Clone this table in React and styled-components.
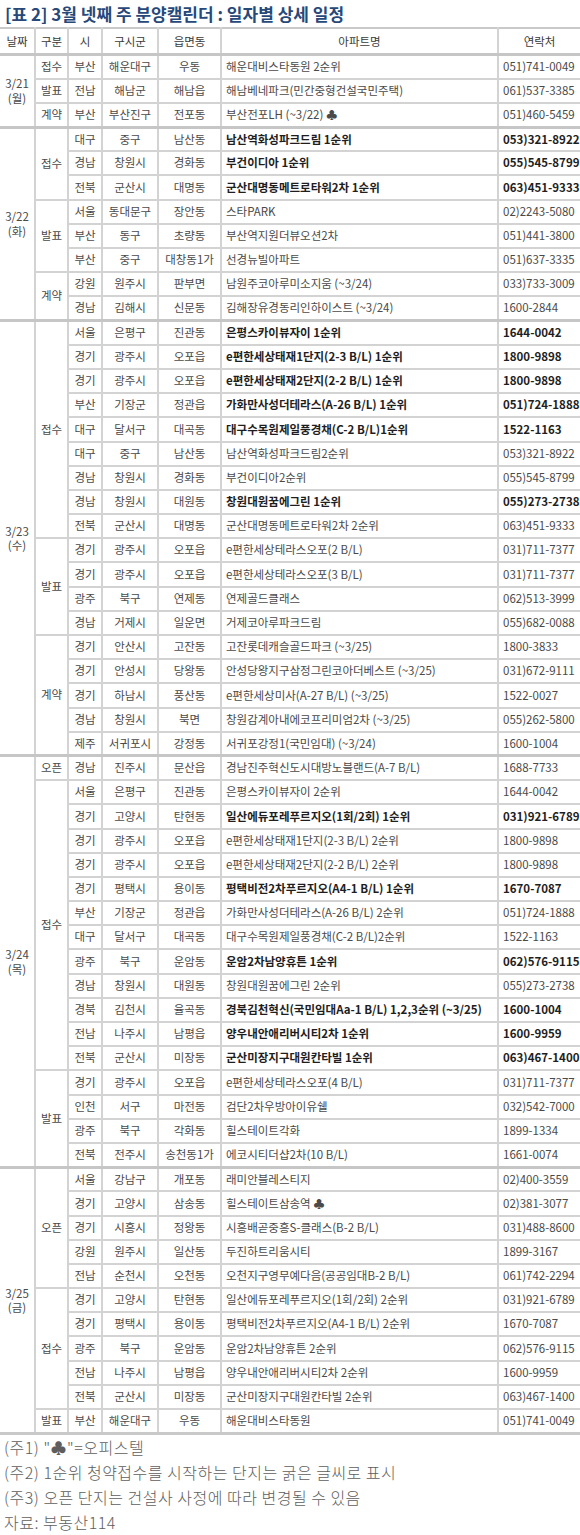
import React from 'react';
import styled, { createGlobalStyle } from 'styled-components';

const GlobalStyle = createGlobalStyle`
	html, body {
		margin: 0;
		padding: 0;
		background: #ffffff;
	}

	body {
		font-family: "Noto Sans CJK KR", "Noto Sans", sans-serif;
	}
`;

// 날짜 > 구분 > 단지, 여섯째 값 true = 1순위 청약접수 (굵은 글씨)
const schedule = [
	{
		date: '3/21',
		day: '월',
		groups: [
			{ type: '접수', rows: [['부산', '해운대구', '우동', '해운대비스타동원 2순위', '051)741-0049']] },
			{ type: '발표', rows: [['전남', '해남군', '해남읍', '해남베네파크(민간중형건설국민주택)', '061)537-3385']] },
			{ type: '계약', rows: [['부산', '부산진구', '전포동', '부산전포LH (~3/22) ♣', '051)460-5459']] },
		],
	},
	{
		date: '3/22',
		day: '화',
		groups: [
			{
				type: '접수',
				rows: [
					['대구', '중구', '남산동', '남산역화성파크드림 1순위', '053)321-8922', true],
					['경남', '창원시', '경화동', '부건이디아 1순위', '055)545-8799', true],
					['전북', '군산시', '대명동', '군산대명동메트로타워2차 1순위', '063)451-9333', true],
				],
			},
			{
				type: '발표',
				rows: [
					['서울', '동대문구', '장안동', '스타PARK', '02)2243-5080'],
					['부산', '동구', '초량동', '부산역지원더뷰오션2차', '051)441-3800'],
					['부산', '중구', '대창동1가', '선경뉴빌아파트', '051)637-3335'],
				],
			},
			{
				type: '계약',
				rows: [
					['강원', '원주시', '판부면', '남원주코아루미소지움 (~3/24)', '033)733-3009'],
					['경남', '김해시', '신문동', '김해장유경동리인하이스트 (~3/24)', '1600-2844'],
				],
			},
		],
	},
	{
		date: '3/23',
		day: '수',
		groups: [
			{
				type: '접수',
				rows: [
					['서울', '은평구', '진관동', '은평스카이뷰자이 1순위', '1644-0042', true],
					['경기', '광주시', '오포읍', 'e편한세상태재1단지(2-3 B/L) 1순위', '1800-9898', true],
					['경기', '광주시', '오포읍', 'e편한세상태재2단지(2-2 B/L) 1순위', '1800-9898', true],
					['부산', '기장군', '정관읍', '가화만사성더테라스(A-26 B/L) 1순위', '051)724-1888', true],
					['대구', '달서구', '대곡동', '대구수목원제일풍경채(C-2 B/L)1순위', '1522-1163', true],
					['대구', '중구', '남산동', '남산역화성파크드림2순위', '053)321-8922'],
					['경남', '창원시', '경화동', '부건이디아2순위', '055)545-8799'],
					['경남', '창원시', '대원동', '창원대원꿈에그린 1순위', '055)273-2738', true],
					['전북', '군산시', '대명동', '군산대명동메트로타워2차 2순위', '063)451-9333'],
				],
			},
			{
				type: '발표',
				rows: [
					['경기', '광주시', '오포읍', 'e편한세상테라스오포(2 B/L)', '031)711-7377'],
					['경기', '광주시', '오포읍', 'e편한세상테라스오포(3 B/L)', '031)711-7377'],
					['광주', '북구', '연제동', '연제골드클래스', '062)513-3999'],
					['경남', '거제시', '일운면', '거제코아루파크드림', '055)682-0088'],
				],
			},
			{
				type: '계약',
				rows: [
					['경기', '안산시', '고잔동', '고잔롯데캐슬골드파크 (~3/25)', '1800-3833'],
					['경기', '안성시', '당왕동', '안성당왕지구삼정그린코아더베스트 (~3/25)', '031)672-9111'],
					['경기', '하남시', '풍산동', 'e편한세상미사(A-27 B/L) (~3/25)', '1522-0027'],
					['경남', '창원시', '북면', '창원감계아내에코프리미엄2차 (~3/25)', '055)262-5800'],
					['제주', '서귀포시', '강정동', '서귀포강정1(국민임대) (~3/24)', '1600-1004'],
				],
			},
		],
	},
	{
		date: '3/24',
		day: '목',
		groups: [
			{ type: '오픈', rows: [['경남', '진주시', '문산읍', '경남진주혁신도시대방노블랜드(A-7 B/L)', '1688-7733']] },
			{
				type: '접수',
				rows: [
					['서울', '은평구', '진관동', '은평스카이뷰자이 2순위', '1644-0042'],
					['경기', '고양시', '탄현동', '일산에듀포레푸르지오(1회/2회) 1순위', '031)921-6789', true],
					['경기', '광주시', '오포읍', 'e편한세상태재1단지(2-3 B/L) 2순위', '1800-9898'],
					['경기', '광주시', '오포읍', 'e편한세상태재2단지(2-2 B/L) 2순위', '1800-9898'],
					['경기', '평택시', '용이동', '평택비전2차푸르지오(A4-1 B/L) 1순위', '1670-7087', true],
					['부산', '기장군', '정관읍', '가화만사성더테라스(A-26 B/L) 2순위', '051)724-1888'],
					['대구', '달서구', '대곡동', '대구수목원제일풍경채(C-2 B/L)2순위', '1522-1163'],
					['광주', '북구', '운암동', '운암2차남양휴튼 1순위', '062)576-9115', true],
					['경남', '창원시', '대원동', '창원대원꿈에그린 2순위', '055)273-2738'],
					['경북', '김천시', '율곡동', '경북김천혁신(국민임대Aa-1 B/L) 1,2,3순위 (~3/25)', '1600-1004', true],
					['전남', '나주시', '남평읍', '양우내안애리버시티2차 1순위', '1600-9959', true],
					['전북', '군산시', '미장동', '군산미장지구대원칸타빌 1순위', '063)467-1400', true],
				],
			},
			{
				type: '발표',
				rows: [
					['경기', '광주시', '오포읍', 'e편한세상테라스오포(4 B/L)', '031)711-7377'],
					['인천', '서구', '마전동', '검단2차우방아이유쉘', '032)542-7000'],
					['광주', '북구', '각화동', '힐스테이트각화', '1899-1334'],
					['전북', '전주시', '송천동1가', '에코시티더샵2차(10 B/L)', '1661-0074'],
				],
			},
		],
	},
	{
		date: '3/25',
		day: '금',
		groups: [
			{
				type: '오픈',
				rows: [
					['서울', '강남구', '개포동', '래미안블레스티지', '02)400-3559'],
					['경기', '고양시', '삼송동', '힐스테이트삼송역 ♣', '02)381-3077'],
					['경기', '시흥시', '정왕동', '시흥배곧중흥S-클래스(B-2 B/L)', '031)488-8600'],
					['강원', '원주시', '일산동', '두진하트리움시티', '1899-3167'],
					['전남', '순천시', '오천동', '오천지구영무예다음(공공임대B-2 B/L)', '061)742-2294'],
				],
			},
			{
				type: '접수',
				rows: [
					['경기', '고양시', '탄현동', '일산에듀포레푸르지오(1회/2회) 2순위', '031)921-6789'],
					['경기', '평택시', '용이동', '평택비전2차푸르지오(A4-1 B/L) 2순위', '1670-7087'],
					['광주', '북구', '운암동', '운암2차남양휴튼 2순위', '062)576-9115'],
					['전남', '나주시', '남평읍', '양우내안애리버시티2차 2순위', '1600-9959'],
					['전북', '군산시', '미장동', '군산미장지구대원칸타빌 2순위', '063)467-1400'],
				],
			},
			{ type: '발표', rows: [['부산', '해운대구', '우동', '해운대비스타동원', '051)741-0049']] },
		],
	},
];

const notes = [
	'(주1) "♣"=오피스텔',
	'(주2) 1순위 청약접수를 시작하는 단지는 굵은 글씨로 표시',
	'(주3) 오픈 단지는 건설사 사정에 따라 변경될 수 있음',
	'자료: 부동산114',
];

const PageWrapper = styled.div`
	width: 580px;
`;

const Title = styled.h2`
	margin: 0;
	padding: 0 0 0 5px;
	height: 27px;
	line-height: 27px;
	font-size: 17px;
	font-weight: 700;
	color: #27497a;
	white-space: nowrap;
`;

const Table = styled.table`
	width: 580px;
	table-layout: fixed;
	border-collapse: collapse;
	border-top: 2px solid #c9c9c9;
	border-bottom: 3px solid #c9c9c9;
	font-size: 11.5px;
`;

const HeadCell = styled.th`
	height: 24px;
	padding: 0;
	font-weight: 400;
	color: #3a3a3a;
	text-align: center;
	border: 2px solid #d3d3d3;
	border-top: none;

	&:first-child {
		border-left: none;
	}

	&:last-child {
		border-right: none;
	}
`;

const Row = styled.tr`
	height: 24.2px;
`;

const Cell = styled.td`
	padding: 0 ${(props) => (props.$align === 'left' ? '4px' : '0')};
	text-align: ${(props) => props.$align || 'center'};
	vertical-align: middle;
	white-space: nowrap;
	overflow: hidden;
	font-weight: ${(props) => (props.$bold ? 700 : 400)};
	color: ${(props) => (props.$bold ? '#1e1e1e' : '#4a4a4a')};
	border: 2px solid #d3d3d3;
	border-top-width: ${(props) => (props.$groupStart ? '3px' : '2px')};
	border-top-color: ${(props) => (props.$groupStart ? '#c6c6c6' : '#d3d3d3')};
	line-height: 1.2;

	&:last-child {
		border-right: none;
	}
`;

const DateCell = styled(Cell)`
	border-left: none;
	color: #4a4a4a;
	line-height: 1.25;
`;

const Notes = styled.div`
	padding: 0 0 0 4px;
`;

const Note = styled.p`
	margin: 0;
	height: 25px;
	line-height: 25px;
	font-size: 16px;
	font-weight: 300;
	letter-spacing: 0.5px;
	color: #5e5e5e;
	white-space: nowrap;
`;

const columns = [35, 33, 34, 56, 63, 277, 82];
const headers = ['날짜', '구분', '시', '구시군', '읍면동', '아파트명', '연락처'];

const DayRows = ({ day }) => {
	const total = day.groups.reduce((sum, group) => sum + group.rows.length, 0);
	const out = [];

	day.groups.forEach((group, groupIndex) => {
		group.rows.forEach((row, rowIndex) => {
			const [city, district, town, name, phone, bold] = row;
			const dayStart = groupIndex === 0 && rowIndex === 0;

			out.push(
				<Row key={`${day.date}-${group.type}-${rowIndex}`}>
					{dayStart && (
						<DateCell rowSpan={total} $groupStart>
							{day.date}
							<br />({day.day})
						</DateCell>
					)}
					{rowIndex === 0 && (
						<Cell rowSpan={group.rows.length} $groupStart={dayStart}>
							{group.type}
						</Cell>
					)}
					<Cell $groupStart={dayStart}>{city}</Cell>
					<Cell $groupStart={dayStart}>{district}</Cell>
					<Cell $groupStart={dayStart}>{town}</Cell>
					<Cell $align="left" $bold={bold} $groupStart={dayStart}>{name}</Cell>
					<Cell $align="left" $bold={bold} $groupStart={dayStart}>{phone}</Cell>
				</Row>
			);
		});
	});

	return out;
};

const App = () => (
	<PageWrapper>
		<GlobalStyle />
		<Title>[표 2] 3월 넷째 주 분양캘린더 : 일자별 상세 일정</Title>
		<Table>
			<colgroup>
				{columns.map((width, i) => (
					<col key={i} style={{ width }} />
				))}
			</colgroup>
			<thead>
				<tr>
					{headers.map((label) => (
						<HeadCell key={label}>{label}</HeadCell>
					))}
				</tr>
			</thead>
			<tbody>
				{schedule.map((day) => (
					<DayRows key={day.date} day={day} />
				))}
			</tbody>
		</Table>
		<Notes>
			{notes.map((note) => (
				<Note key={note}>{note}</Note>
			))}
		</Notes>
	</PageWrapper>
);

export default App;
